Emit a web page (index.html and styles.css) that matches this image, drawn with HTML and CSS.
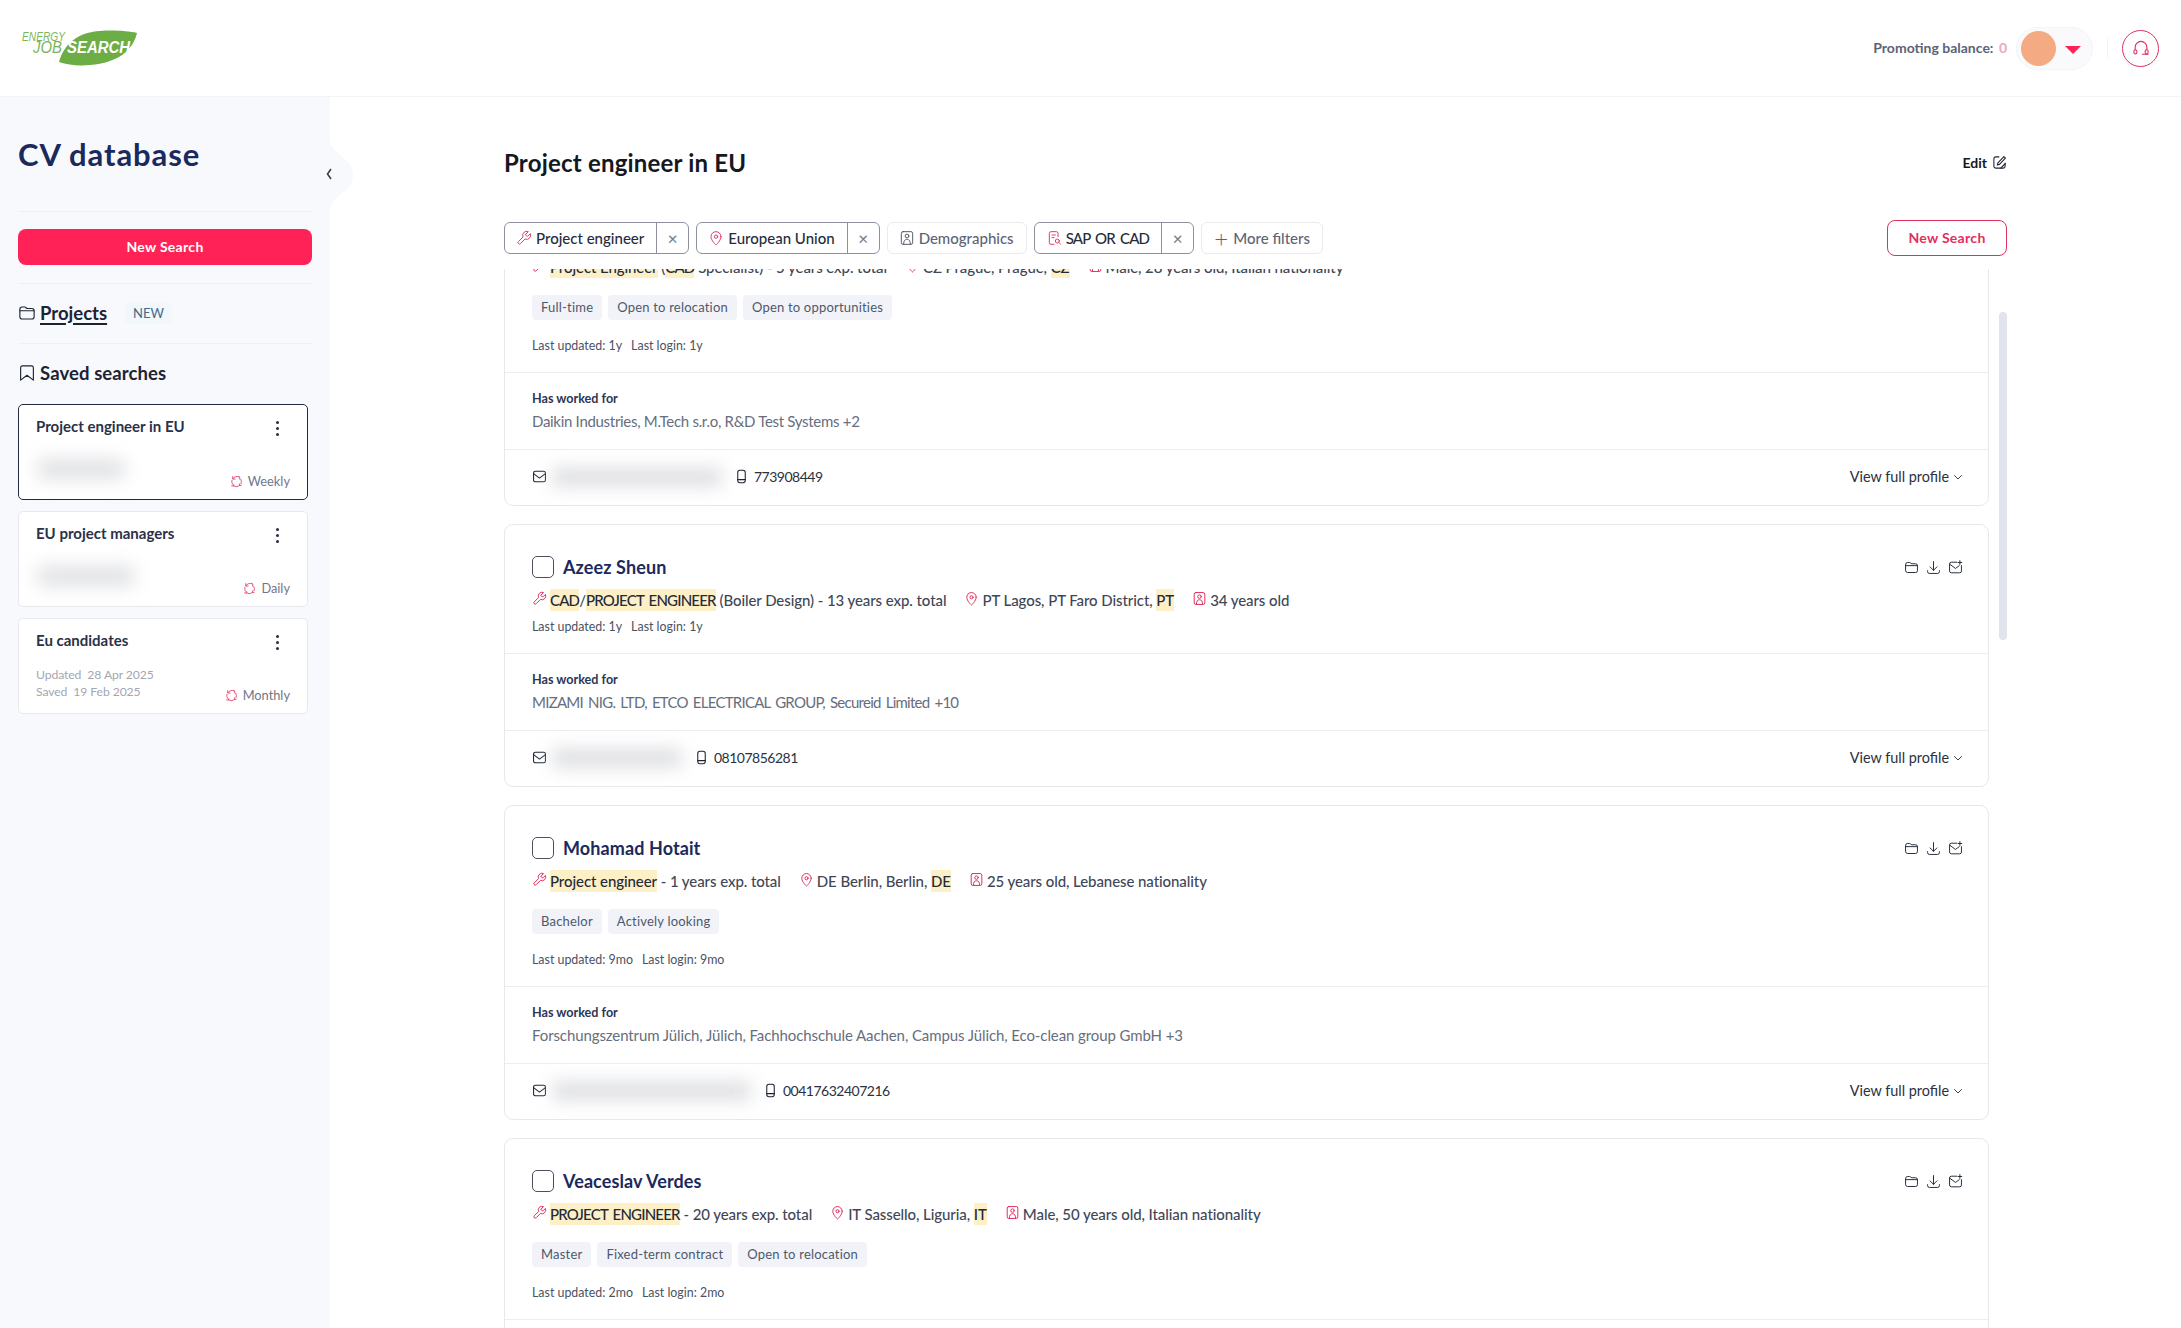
FILE: index.html
```html
<!DOCTYPE html>
<html lang="en">
<head>
  <meta charset="UTF-8">
  <meta name="viewport" content="width=device-width, initial-scale=1.0">
  <title>CV database</title>
  <link rel="stylesheet" href="styles.css">
</head>
<body>
  <svg class="sprite" aria-hidden="true">
    <symbol id="i-wrench" viewBox="0 0 24 24"><path d="M14.7 6.3a1 1 0 0 0 0 1.4l1.6 1.6a1 1 0 0 0 1.4 0l3.77-3.77a6 6 0 0 1-7.94 7.94l-6.91 6.91a2.12 2.12 0 0 1-3-3l6.91-6.91a6 6 0 0 1 7.94-7.94l-3.76 3.76z"/></symbol>
    <symbol id="i-pin" viewBox="0 0 24 24"><path d="M19.5 10c0 6-7.5 12.5-7.5 12.5S4.5 16 4.5 10a7.5 7.5 0 0 1 15 0z"/><circle cx="12" cy="10" r="2.5"/></symbol>
    <symbol id="i-person" viewBox="0 0 24 24"><rect x="3.5" y="2.5" width="17" height="19" rx="2.5"/><circle cx="12" cy="9" r="2.8"/><path d="M7 21c0-5 2-7 5-7s5 2 5 7"/></symbol>
    <symbol id="i-docsearch" viewBox="0 0 24 24"><path d="M18 10V5a2.5 2.5 0 0 0-2.5-2.5h-8A2.5 2.5 0 0 0 5 5v14a2.5 2.5 0 0 0 2.5 2.5H12"/><path d="M9 7.5h5M9 11.5h3"/><circle cx="17" cy="16.5" r="3"/><path d="M19.2 18.7L22 21.5"/></symbol>
    <symbol id="i-mail" viewBox="0 0 24 24"><rect x="2.5" y="3.5" width="19" height="17" rx="3"/><path d="M2.5 7.5l9.5 7 9.5-7"/></symbol>
    <symbol id="i-phone" viewBox="0 0 24 24"><rect x="6" y="2" width="12" height="20" rx="3.5"/><path d="M6 17h12"/></symbol>
    <symbol id="i-folder" viewBox="0 0 24 24"><path d="M2.5 7a3 3 0 0 1 3-3H9c1.5 0 2 2 3.5 2h6a3 3 0 0 1 3 3v8a3 3 0 0 1-3 3h-13a3 3 0 0 1-3-3z"/><path d="M2.5 9h19"/></symbol>
    <symbol id="i-download" viewBox="0 0 24 24"><path d="M12 2.5v14M6.5 11l5.5 5.5 5.5-5.5M2.5 17v1.5a3 3 0 0 0 3 3h13a3 3 0 0 0 3-3V17"/></symbol>
    <symbol id="i-mailplus" viewBox="0 0 24 24"><path d="M14 3.5H5.500a3 3 0 0 0-3 3v11a3 3 0 0 0 3 3h13a3 3 0 0 0 3-3V9"/><path d="M2.5 6.5L12 13.5l6-4.5M19 1v6M16 4h6"/></symbol>
    <symbol id="i-bookmark" viewBox="0 0 24 24"><path d="M6 2.5h12A2.5 2.5 0 0 1 20.5 5v16.5L12 15l-8.5 6.5V5A2.5 2.5 0 0 1 6 2.5z"/></symbol>
    <symbol id="i-cycle" viewBox="0 0 24 24"><path d="M5 7a9 9 0 0 1 12-3.5M20 8a9 9 0 0 1 .5 8M18 19a9 9 0 0 1-11 1.5M4.5 17a9 9 0 0 1-1-7"/><path d="M5 3v4.5h4.5M16 2.5l2.500 2-1 3M20.5 19l-2.5.5-.5-3M3 20l3.5.5.5-3"/></symbol>
    <symbol id="i-headset" viewBox="0 0 24 24"><path d="M5 14v-3a7 7 0 0 1 14 0v3"/><rect x="3.5" y="14" width="3.5" height="5" rx="1.7"/><rect x="17" y="14" width="3.5" height="5" rx="1.7"/><path d="M20.5 19.5h-7"/></symbol>
    <symbol id="i-edit" viewBox="0 0 24 24"><path d="M11 3H6a3 3 0 0 0-3 3v12a3 3 0 0 0 3 3h12a3 3 0 0 0 3-3v-5"/><path d="M19 2.5L21.5 5 12 15l-3.5 1 1-3.5zM14 21l7-7"/></symbol>
    <symbol id="i-chevron" viewBox="0 0 24 24"><path d="M5 9l7 7 7-7"/></symbol>
  </svg>

  <header class="topbar">
    <svg class="logo" viewBox="0 0 125 40" role="img" aria-label="Energy Job Search">
      <path class="logo-leaf" d="M41 34C46 16 60 4 82 3C96 2 110 3 119 5C115 22 100 35 72 37C60 38 50 37 41 34Z"/>
      <text class="logo-energy" x="4" y="13" textLength="43" lengthAdjust="spacingAndGlyphs">ENERGY</text>
      <text class="logo-job" x="15" y="25" textLength="29" lengthAdjust="spacingAndGlyphs">JOB</text>
      <text class="logo-search" x="49" y="25" textLength="63" lengthAdjust="spacingAndGlyphs">SEARCH</text>
    </svg>
    <div class="topbar-right">
      <span class="balance">Promoting balance: <em>0</em></span>
      <div class="user-pill">
        <span class="avatar"></span>
        <span class="caret"></span>
      </div>
      <span class="topbar-sep"></span>
      <a class="support"><svg class="ic"><use href="#i-headset"/></svg></a>
    </div>
  </header>

  <div class="layout">
    <aside class="sidebar">
      <h1>CV database</h1>
      <button class="btn-primary">New Search</button>
      <div class="side-row">
        <svg class="ic side-ic"><use href="#i-folder"/></svg>
        <a class="side-link">Projects</a>
        <span class="badge-new">NEW</span>
      </div>
      <div class="side-row side-row-plain">
        <svg class="ic side-ic"><use href="#i-bookmark"/></svg>
        <span class="side-title">Saved searches</span>
      </div>

      <div class="saved-list">
        <div class="saved-card active">
          <div class="saved-top"><h4>Project engineer in EU</h4><span class="dots"><i></i><i></i><i></i></span></div>
          <div class="saved-bottom">
            <span class="saved-blur"></span>
            <span class="freq"><svg class="ic"><use href="#i-cycle"/></svg>Weekly</span>
          </div>
        </div>
        <div class="saved-card">
          <div class="saved-top"><h4>EU project managers</h4><span class="dots"><i></i><i></i><i></i></span></div>
          <div class="saved-bottom">
            <span class="saved-blur wide"></span>
            <span class="freq"><svg class="ic"><use href="#i-cycle"/></svg>Daily</span>
          </div>
        </div>
        <div class="saved-card">
          <div class="saved-top"><h4>Eu candidates</h4><span class="dots"><i></i><i></i><i></i></span></div>
          <div class="saved-bottom">
            <div class="saved-dates">
              <div>Updated&nbsp; 28 Apr 2025</div>
              <div>Saved&nbsp; 19 Feb 2025</div>
            </div>
            <span class="freq"><svg class="ic"><use href="#i-cycle"/></svg>Monthly</span>
          </div>
        </div>
      </div>

      <div class="collapse">
        <svg viewBox="0 0 24 66"><path class="bump" d="M0 0C4 14 23 16 23 33C23 50 4 52 0 66Z"/><path class="chev" d="M1 27L-2.5 32L1 37"/></svg>
      </div>
    </aside>

    <main class="main">
      <div class="title-row">
        <h2>Project engineer in EU</h2>
        <a class="edit">Edit <svg class="ic"><use href="#i-edit"/></svg></a>
      </div>

      <div class="filter-row">
        <div class="chips">
          <div class="chip on">
            <span class="chip-label"><svg class="ic pink"><use href="#i-wrench"/></svg>Project engineer</span>
            <span class="chip-x">×</span>
          </div>
          <div class="chip on">
            <span class="chip-label"><svg class="ic pink"><use href="#i-pin"/></svg>European Union</span>
            <span class="chip-x">×</span>
          </div>
          <div class="chip">
            <span class="chip-label"><svg class="ic"><use href="#i-person"/></svg>Demographics</span>
          </div>
          <div class="chip on">
            <span class="chip-label caps"><svg class="ic pink"><use href="#i-docsearch"/></svg>SAP OR CAD</span>
            <span class="chip-x">×</span>
          </div>
          <div class="chip">
            <span class="chip-label"><span class="plus">+</span>More filters</span>
          </div>
        </div>
        <button class="btn-outline">New Search</button>
      </div>

      <div class="results">
        <div class="results-list">

          <article class="cv-card">
            <div class="cv-main">
              <div class="cv-head"></div>
              <div class="cv-info">
                <span class="info"><svg class="ic pink"><use href="#i-wrench"/></svg><span><mark>Project Engineer</mark> (<mark class="caps">CAD</mark> Specialist) - 5 years exp. total</span></span>
                <span class="info"><svg class="ic pink"><use href="#i-pin"/></svg><span>CZ Prague, Prague, <mark>CZ</mark></span></span>
                <span class="info"><svg class="ic pink"><use href="#i-person"/></svg><span>Male, 28 years old, Italian nationality</span></span>
              </div>
              <div class="tags"><span>Full-time</span><span>Open to relocation</span><span>Open to opportunities</span></div>
              <div class="cv-dates with-tags"><span>Last updated: 1y</span><span>Last login: 1y</span></div>
            </div>
            <div class="cv-work">
              <h5>Has worked for</h5>
              <p class="tight">Daikin Industries, M.Tech s.r.o, R&amp;D Test Systems +2</p>
            </div>
            <div class="cv-foot">
              <svg class="ic"><use href="#i-mail"/></svg>
              <span class="mail-blur w-a"></span>
              <svg class="ic phone"><use href="#i-phone"/></svg>
              <span class="tel">773908449</span>
              <a class="view">View full profile <svg class="ic"><use href="#i-chevron"/></svg></a>
            </div>
          </article>

          <article class="cv-card">
            <div class="cv-main">
              <div class="cv-head">
                <span class="check"></span>
                <h3>Azeez Sheun</h3>
                <div class="cv-actions">
                  <svg class="ic"><use href="#i-folder"/></svg>
                  <svg class="ic"><use href="#i-download"/></svg>
                  <svg class="ic"><use href="#i-mailplus"/></svg>
                </div>
              </div>
              <div class="cv-info">
                <span class="info"><svg class="ic pink"><use href="#i-wrench"/></svg><span><mark class="caps">CAD</mark>/<mark class="caps">PROJECT ENGINEER</mark> (Boiler Design) - 13 years exp. total</span></span>
                <span class="info"><svg class="ic pink"><use href="#i-pin"/></svg><span>PT Lagos, PT Faro District, <mark>PT</mark></span></span>
                <span class="info"><svg class="ic pink"><use href="#i-person"/></svg><span>34 years old</span></span>
              </div>
              <div class="cv-dates"><span>Last updated: 1y</span><span>Last login: 1y</span></div>
            </div>
            <div class="cv-work">
              <h5>Has worked for</h5>
              <p class="caps">MIZAMI NIG. LTD, ETCO ELECTRICAL GROUP, Secureid Limited +10</p>
            </div>
            <div class="cv-foot">
              <svg class="ic"><use href="#i-mail"/></svg>
              <span class="mail-blur w-b"></span>
              <svg class="ic phone"><use href="#i-phone"/></svg>
              <span class="tel">08107856281</span>
              <a class="view">View full profile <svg class="ic"><use href="#i-chevron"/></svg></a>
            </div>
          </article>

          <article class="cv-card">
            <div class="cv-main">
              <div class="cv-head">
                <span class="check"></span>
                <h3>Mohamad Hotait</h3>
                <div class="cv-actions">
                  <svg class="ic"><use href="#i-folder"/></svg>
                  <svg class="ic"><use href="#i-download"/></svg>
                  <svg class="ic"><use href="#i-mailplus"/></svg>
                </div>
              </div>
              <div class="cv-info">
                <span class="info"><svg class="ic pink"><use href="#i-wrench"/></svg><span><mark>Project engineer</mark> - 1 years exp. total</span></span>
                <span class="info"><svg class="ic pink"><use href="#i-pin"/></svg><span>DE Berlin, Berlin, <mark>DE</mark></span></span>
                <span class="info"><svg class="ic pink"><use href="#i-person"/></svg><span>25 years old, Lebanese nationality</span></span>
              </div>
              <div class="tags"><span>Bachelor</span><span>Actively looking</span></div>
              <div class="cv-dates with-tags"><span>Last updated: 9mo</span><span>Last login: 9mo</span></div>
            </div>
            <div class="cv-work">
              <h5>Has worked for</h5>
              <p>Forschungszentrum Jülich, Jülich, Fachhochschule Aachen, Campus Jülich, Eco-clean group GmbH +3</p>
            </div>
            <div class="cv-foot">
              <svg class="ic"><use href="#i-mail"/></svg>
              <span class="mail-blur w-c"></span>
              <svg class="ic phone"><use href="#i-phone"/></svg>
              <span class="tel">00417632407216</span>
              <a class="view">View full profile <svg class="ic"><use href="#i-chevron"/></svg></a>
            </div>
          </article>

          <article class="cv-card">
            <div class="cv-main">
              <div class="cv-head">
                <span class="check"></span>
                <h3>Veaceslav Verdes</h3>
                <div class="cv-actions">
                  <svg class="ic"><use href="#i-folder"/></svg>
                  <svg class="ic"><use href="#i-download"/></svg>
                  <svg class="ic"><use href="#i-mailplus"/></svg>
                </div>
              </div>
              <div class="cv-info">
                <span class="info"><svg class="ic pink"><use href="#i-wrench"/></svg><span><mark class="caps">PROJECT ENGINEER</mark> - 20 years exp. total</span></span>
                <span class="info"><svg class="ic pink"><use href="#i-pin"/></svg><span>IT Sassello, Liguria, <mark>IT</mark></span></span>
                <span class="info"><svg class="ic pink"><use href="#i-person"/></svg><span>Male, 50 years old, Italian nationality</span></span>
              </div>
              <div class="tags"><span>Master</span><span>Fixed-term contract</span><span>Open to relocation</span></div>
              <div class="cv-dates with-tags"><span>Last updated: 2mo</span><span>Last login: 2mo</span></div>
            </div>
            <div class="cv-work"></div>
          </article>

        </div>
        <span class="scroll-thumb"></span>
      </div>
    </main>
  </div>
</body>
</html>
```

FILE: styles.css
```css
:root {
  --navy: #1b2a5c;
  --ink: #1c2333;
  --text: #3f4757;
  --muted: #666e7d;
  --pink: #e0305f;
  --red: #ff2257;
  --line: #eceef2;
  --side-bg: #f8f9fc;
  --mark: #fdf0c7;
}

* {
  box-sizing: border-box;
}

html, body {
  height: 100%;
}

body {
  margin: 0;
  overflow: hidden;
  background: #fff;
  color: var(--text);
  font-family: "Lato", "Liberation Sans", sans-serif;
  font-size: 15px;
}

.sprite {
  display: none;
}

.ic {
  width: 15px;
  height: 15px;
  flex: none;
  fill: none;
  stroke: #1c2333;
  stroke-width: 1.7;
  stroke-linecap: round;
  stroke-linejoin: round;
}

.ic.pink {
  stroke: var(--pink);
}

.caps {
  letter-spacing: -0.8px;
  word-spacing: 2px;
}

/* top bar */
.topbar {
  height: 97px;
  display: flex;
  align-items: center;
  justify-content: space-between;
  padding: 0 22px 0 18px;
  border-bottom: 1px solid #f3f4f7;
}

.logo {
  width: 125px;
  height: 40px;
}

.logo-leaf {
  fill: #6cae45;
}

.logo text {
  font-family: "Liberation Sans", sans-serif;
  font-style: italic;
}

.logo-energy {
  font-size: 12px;
  fill: #7cb55b;
}

.logo-job {
  font-size: 16px;
  fill: #7cb55b;
}

.logo-search {
  font-size: 16px;
  font-weight: 700;
  fill: #fff;
}

.topbar-right {
  display: flex;
  align-items: center;
}

.balance {
  font-size: 14px;
  font-weight: 700;
  color: #5a6478;
  margin-top: -2px;
}

.balance em {
  font-style: normal;
  color: #e7a9b9;
  margin-left: 2px;
}

.user-pill {
  width: 77px;
  height: 43px;
  margin-left: 9px;
  padding-left: 4px;
  display: flex;
  align-items: center;
  gap: 9px;
  background: #fafafc;
  border: 1px solid #f4f4f8;
  border-radius: 22px;
}

.avatar {
  width: 35px;
  height: 35px;
  border-radius: 50%;
  background: #f4aa82;
  filter: blur(0.6px);
}

.caret {
  width: 0;
  height: 0;
  margin-top: 3px;
  border-left: 8px solid transparent;
  border-right: 8px solid transparent;
  border-top: 8px solid var(--red);
}

.topbar-sep {
  width: 1px;
  height: 22px;
  margin: 0 14px;
  background: #f3f4f7;
}

.support {
  width: 37px;
  height: 37px;
  display: flex;
  align-items: center;
  justify-content: center;
  border: 1px solid var(--pink);
  border-radius: 50%;
}

.support .ic {
  width: 20px;
  height: 20px;
  stroke: var(--pink);
  stroke-width: 1.3;
}

.layout {
  display: grid;
  grid-template-columns: 330px 1fr;
  height: calc(100% - 97px);
}

/* sidebar */
.sidebar {
  position: relative;
  padding: 39px 18px 0;
  background: var(--side-bg);
}

.sidebar h1 {
  width: 294px;
  margin: 0 0 17px;
  padding-bottom: 39px;
  border-bottom: 1px solid #f0f1f5;
  font-size: 31px;
  line-height: 36px;
  font-weight: 700;
  color: var(--navy);
  letter-spacing: 0.9px;
}

.btn-primary {
  display: block;
  width: 294px;
  height: 36px;
  margin: 0;
  padding: 0 0 2px;
  border: none;
  border-radius: 8px;
  background: var(--red);
  color: #fff;
  font: 700 14px "Lato", sans-serif;
  letter-spacing: 0.3px;
}

.side-row {
  width: 294px;
  height: 61px;
  margin-top: 18px;
  padding-bottom: 2px;
  display: flex;
  align-items: center;
  border-top: 1px solid #f0f1f5;
  border-bottom: 1px solid #f0f1f5;
}

.side-row-plain {
  margin-top: 0;
  height: 60px;
  border: none;
}

.side-ic {
  width: 18px;
  height: 18px;
  margin-right: 4px;
  stroke-width: 1.5;
}

.side-link {
  font-size: 18.5px;
  font-weight: 700;
  color: var(--ink);
  text-decoration: underline;
  text-decoration-thickness: 2px;
  text-underline-offset: 3px;
}

.side-title {
  font-size: 18.5px;
  font-weight: 700;
  color: var(--ink);
  letter-spacing: 0.1px;
}

.badge-new {
  margin-left: 18px;
  padding: 3px 8px;
  border-radius: 4px;
  background: #f1f7fb;
  color: #3f6b8c;
  font-size: 13px;
}

.saved-list {
  width: 290px;
  display: flex;
  flex-direction: column;
  gap: 11px;
}

.saved-card {
  height: 96px;
  padding: 11px 17px 10px;
  display: flex;
  flex-direction: column;
  justify-content: space-between;
  background: #fff;
  border: 1px solid #e7e9ef;
  border-radius: 5px;
  overflow: hidden;
}

.saved-card.active {
  border-color: #242b40;
}

.saved-top {
  display: flex;
  justify-content: space-between;
  padding-right: 11px;
}

.saved-top h4 {
  margin: 0;
  font-size: 15px;
  line-height: 20px;
  font-weight: 700;
  color: #2b3148;
}

.dots {
  display: flex;
  flex-direction: column;
  gap: 3px;
  padding-top: 5px;
}

.dots i {
  width: 3px;
  height: 3px;
  border-radius: 50%;
  background: #2b3148;
}

.saved-bottom {
  display: flex;
  justify-content: space-between;
  align-items: flex-end;
}

.saved-blur {
  width: 86px;
  height: 20px;
  margin: 0 0 10px 2px;
  background: #e0e1e4;
  filter: blur(9px);
}

.saved-blur.wide {
  width: 96px;
}

.saved-dates {
  font-size: 12.2px;
  line-height: 17px;
  color: #a2a7b2;
  letter-spacing: -0.1px;
  margin-bottom: 3px;
}

.freq {
  display: flex;
  align-items: center;
  gap: 5px;
  font-size: 12.8px;
  color: #70778a;
}

.freq .ic {
  stroke: var(--pink);
  stroke-width: 1.5;
  width: 13px;
  height: 13px;
}

.collapse {
  position: absolute;
  top: 45px;
  left: 330px;
  width: 24px;
  height: 66px;
}

.collapse svg {
  display: block;
  width: 24px;
  height: 66px;
  overflow: visible;
}

.bump {
  fill: var(--side-bg);
}

.chev {
  fill: none;
  stroke: #333a4d;
  stroke-width: 1.5;
}

/* main */
.main {
  display: flex;
  flex-direction: column;
  min-height: 0;
  padding: 50px 174px 0;
}

.title-row {
  display: flex;
  align-items: center;
  justify-content: space-between;
  height: 30px;
}

.title-row h2 {
  margin: 0;
  font-size: 24px;
  font-weight: 700;
  color: #15181f;
  letter-spacing: 0.2px;
}

.edit {
  display: flex;
  align-items: center;
  gap: 5px;
  padding-top: 1px;
  font-size: 14px;
  font-weight: 700;
  color: #15181f;
}

.filter-row {
  display: flex;
  align-items: center;
  justify-content: space-between;
  margin-top: 43px;
}

.chips {
  display: flex;
  gap: 7px;
}

.chip {
  height: 32px;
  display: flex;
  background: #fff;
  border: 1px solid #e9ebf0;
  border-radius: 6px;
  color: #5d6575;
  font-size: 15px;
  font-weight: 500;
}

.chip.on {
  border-color: #8d929e;
  color: #262c3b;
}

.chip-label {
  display: flex;
  align-items: center;
  gap: 4px;
  padding: 0 12px 0 11px;
}

.chip-label .ic {
  width: 16px;
  height: 16px;
  stroke-width: 1.4;
}

.chip:not(.on) .ic {
  stroke: #4a5160;
}

.chip-x {
  width: 32px;
  display: flex;
  align-items: center;
  justify-content: center;
  border-left: 1px solid #8d929e;
  color: #777d8b;
  font-size: 17px;
}

.plus {
  width: 16px;
  text-align: center;
  font-size: 24px;
  font-weight: 300;
  line-height: 22px;
}

.btn-outline {
  width: 120px;
  height: 36px;
  padding: 0 0 2px;
  background: #fff;
  border: 1px solid var(--pink);
  border-radius: 8px;
  color: var(--pink);
  font: 700 14px "Lato", sans-serif;
  letter-spacing: 0.3px;
}

.results {
  position: relative;
  flex: 1;
  min-height: 0;
  margin-top: 13px;
  overflow: hidden;
}

.results-list {
  width: 1485px;
  margin-top: -78px;
  display: flex;
  flex-direction: column;
  gap: 18px;
}

.scroll-thumb {
  position: absolute;
  top: 43px;
  right: 0;
  width: 8px;
  height: 328px;
  border-radius: 4px;
  background: #e1e4ec;
}

.cv-card {
  border: 1px solid #e6e8ed;
  border-radius: 9px;
  background: #fff;
}

.cv-main {
  padding: 31px 25px 17px 27px;
}

.cv-head {
  display: flex;
  align-items: center;
  height: 22px;
}

.check {
  width: 22px;
  height: 22px;
  flex: none;
  border: 1px solid #4b505c;
  border-radius: 5px;
  margin-right: 9px;
}

.cv-head h3 {
  margin: 0;
  font-size: 18px;
  font-weight: 700;
  color: var(--navy);
  letter-spacing: 0.1px;
}

.cv-actions {
  margin-left: auto;
  display: flex;
  gap: 7px;
}

.cv-actions .ic {
  stroke-width: 1.5;
}

.cv-info {
  display: flex;
  gap: 18px;
  margin-top: 11px;
  height: 22px;
}

.info {
  display: flex;
  align-items: center;
  gap: 3px;
  line-height: 22px;
  font-size: 15px;
  font-weight: 500;
  letter-spacing: -0.08px;
  color: var(--text);
}

.info .ic {
  margin-top: -3px;
  stroke-width: 1.6;
}

mark {
  display: inline-block;
  background: var(--mark);
  color: #242a38;
  line-height: 22px;
}

.tags {
  display: flex;
  gap: 6px;
  margin-top: 17px;
}

.tags span {
  height: 25px;
  line-height: 25px;
  padding: 0 9px;
  border-radius: 4px;
  background: #f2f3f8;
  color: #4e586c;
  font-size: 13px;
  letter-spacing: 0.2px;
}

.cv-dates {
  display: flex;
  gap: 9px;
  margin-top: 7px;
  line-height: 18px;
  font-size: 12.4px;
  color: #4a5263;
}

.cv-dates.with-tags {
  margin-top: 17px;
}

.cv-work {
  padding: 17px 27px;
  border-top: 1px solid var(--line);
}

.cv-work h5 {
  margin: 0 0 2px;
  font-size: 12.6px;
  line-height: 18px;
  font-weight: 700;
  color: #2d3655;
}

.cv-work p {
  margin: 0;
  line-height: 22px;
  font-size: 15px;
  letter-spacing: -0.1px;
  color: var(--muted);
}

.cv-work p.tight {
  letter-spacing: -0.3px;
}

.cv-work p.caps {
  letter-spacing: -0.75px;
}

.cv-foot {
  height: 56px;
  padding: 0 24px 2px 27px;
  display: flex;
  align-items: center;
  border-top: 1px solid var(--line);
  font-size: 14px;
  color: #2b3140;
}

.mail-blur {
  height: 18px;
  margin: 0 12px 0 5px;
  background: #dcdde0;
  filter: blur(9px);
}

.w-a { width: 170px; }
.w-b { width: 130px; }
.w-c { width: 199px; }

.phone {
  margin-right: 5px;
}

.tel {
  letter-spacing: -0.5px;
}

.view {
  margin-left: auto;
  display: flex;
  align-items: center;
  gap: 3px;
  font-size: 14.4px;
  color: #2b3140;
}

.view .ic {
  width: 12px;
  height: 12px;
}
```
